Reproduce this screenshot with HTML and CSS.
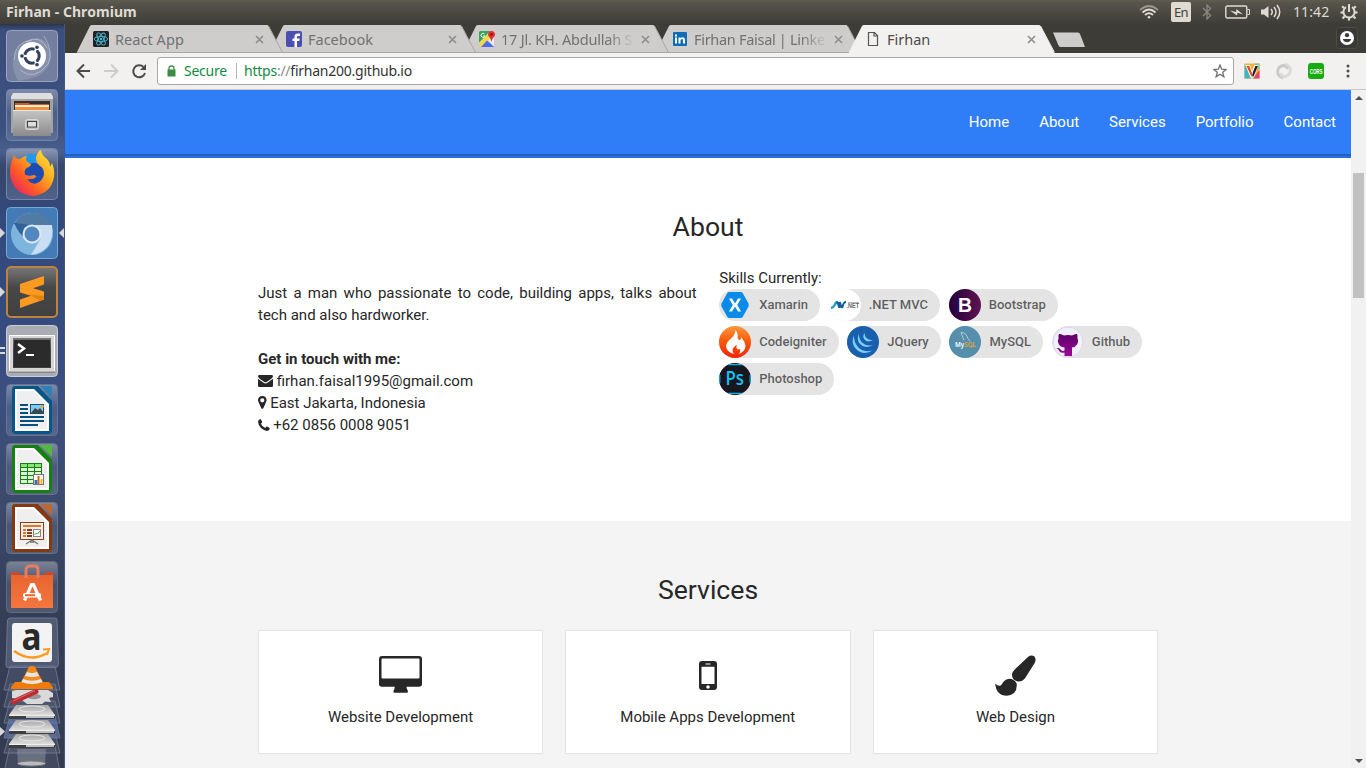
FILE: index.html
```html
<!DOCTYPE html>
<html lang="en">
<head>
<meta charset="utf-8">
<title>Firhan</title>
<link rel="stylesheet" href="styles.css">
</head>
<body>
<svg class="defs" width="0" height="0">
  <defs>
    <linearGradient id="gloss" x1="0" y1="0" x2="0" y2="1"><stop offset="0" stop-color="#fff" stop-opacity=".34"/><stop offset=".45" stop-color="#fff" stop-opacity=".08"/><stop offset="1" stop-color="#fff" stop-opacity=".14"/></linearGradient>
    <linearGradient id="silver" x1="0" y1="0" x2="0" y2="1"><stop offset="0" stop-color="#c4c4c4"/><stop offset="1" stop-color="#8b8b8b"/></linearGradient>
    <linearGradient id="fox" x1="1" y1="0" x2="0" y2="1"><stop offset="0" stop-color="#fff04a"/><stop offset=".35" stop-color="#ffb01f"/><stop offset=".65" stop-color="#ff5a26"/><stop offset="1" stop-color="#e0137e"/></linearGradient>
    <linearGradient id="drive" x1="0" y1="0" x2="0" y2="1"><stop offset="0" stop-color="#a5a5a5"/><stop offset="1" stop-color="#dcdcdc"/></linearGradient>
    <linearGradient id="dark" x1="0" y1="0" x2="0" y2="1"><stop offset="0" stop-color="#777"/><stop offset=".4" stop-color="#484848"/><stop offset="1" stop-color="#404040"/></linearGradient>
    <linearGradient id="bag" x1="0" y1="0" x2="0" y2="1"><stop offset="0" stop-color="#e8642e"/><stop offset="1" stop-color="#f5763f"/></linearGradient>
    <linearGradient id="flame" x1="0" y1="0" x2="0" y2="1"><stop offset="0" stop-color="#fb9a3c"/><stop offset=".45" stop-color="#f85c0c"/><stop offset="1" stop-color="#f3230a"/></linearGradient>
    <linearGradient id="boot" x1="0" y1="0" x2="1" y2="0"><stop offset="0" stop-color="#24003c"/><stop offset="1" stop-color="#5e1450"/></linearGradient>
    <linearGradient id="octo" x1="0" y1="0" x2="0" y2="1"><stop offset="0" stop-color="#5b0068"/><stop offset="1" stop-color="#9a0a94"/></linearGradient>
    <g id="tab-shape"><path d="M0 28 L13 2 Q13.500 1 15 1 H190 Q191 1 191.500 2 L205 28Z" stroke="none"/><path d="M191.500 2 L205.500 28.500 M0 28.500 H205" fill="none"/></g>
    <g id="cross"><path d="M1 1 L8 8 M8 1 L1 8" stroke="#8d8d8b" stroke-width="1.600" fill="none"/></g>
  </defs>
</svg>

<header class="panel">
  <span class="panel-title">Firhan - Chromium</span>
  <div class="indicators">
    <svg class="i-wifi" width="20" height="16" viewBox="0 0 20 16" fill="none" stroke="#dfdbd2" stroke-width="1.800"><path d="M1 6 Q10 -2 19 6" opacity=".5"/><path d="M3.500 8.500 Q10 2.500 16.500 8.500"/><path d="M6 11 Q10 7.500 14 11"/><circle cx="10" cy="13.200" r="1.300" fill="#dfdbd2" stroke="none"/></svg>
    <span class="lang">En</span>
    <svg class="i-bt" width="10" height="18" viewBox="0 0 10 18" fill="none" stroke="#8a8880" stroke-width="1.300"><path d="M1 5 L8.500 12.500 L5 16 V2 L8.500 5.500 L1 13"/></svg>
    <svg class="i-bat" width="25" height="14" viewBox="0 0 25 14"><rect x=".8" y="1" width="21" height="12" rx="1.500" fill="none" stroke="#dfdbd2" stroke-width="1.400"/><path d="M22.500 4.500 h2 v5 h-2" fill="none" stroke="#dfdbd2"/><path d="M5 5.500 L11 7 L11.500 4 L18 9.500 L12.500 7.800 L12 10.500Z" fill="#dfdbd2"/></svg>
    <svg class="i-vol" width="21" height="18" viewBox="0 0 21 18"><path d="M1 6.500 h3 L8.500 3 v12 L4 11.500 h-3Z" fill="#dfdbd2"/><path d="M11 6 q2.500 3 0 6 M14 4 q4 5 0 10 M17 2 q5.500 7 0 14" fill="none" stroke="#dfdbd2" stroke-width="1.500"/></svg>
    <span class="clock">11:42</span>
    <svg class="i-gear" width="18" height="18" viewBox="0 0 18 18" fill="none" stroke="#dfdbd2"><path d="M6 4.200 A5.600 5.600 0 1 0 12 4.200" stroke-width="2"/><path d="M9 1 v8" stroke-width="2"/><path d="M9 15 v2.500 M3 9.500 h-2.500 M15 9.500 h2.500 M4.500 13.500 l-2 2 M13.500 13.500 l2 2 M4 5 l-1.800 -1.800 M14 5 l1.800 -1.800" stroke-width="2.200"/></svg>
  </div>
</header>

<div class="desktop">
  <aside class="launcher">
    <div class="tile"><svg viewBox="0 0 52 52"><rect x=".5" y=".5" width="51" height="51" rx="4" fill="#747f9f" stroke="#98a4c4"/><path d="M8 42 Q3 20 22 10 Q38 3 44 20 Q48 36 32 46 Q22 50 12 51 Z" fill="#fff" opacity=".14"/><path d="M8 30 Q8 12 26 10 M14 40 Q28 52 42 34 M38 6 Q48 22 42 34 M20 12 Q34 4 41 18" stroke="#d4daea" fill="none" opacity=".5"/><circle cx="26" cy="26" r="14" fill="#fff"/><circle cx="26" cy="26" r="7.200" fill="none" stroke="#35405f" stroke-width="3"/><path d="M26 26 L14 26 M26 26 L32 36 M26 26 L32 16" stroke="#fff" stroke-width="2"/><circle cx="26" cy="26" r="4" fill="#fff"/><circle cx="16" cy="26" r="2.300" fill="#35405f" stroke="#fff"/><circle cx="31" cy="34.700" r="2.300" fill="#35405f" stroke="#fff"/><circle cx="31" cy="17.300" r="2.300" fill="#35405f" stroke="#fff"/></svg></div>
    <div class="tile"><svg viewBox="0 0 52 52"><rect x=".5" y=".5" width="51" height="51" rx="4" fill="url(#gloss)" stroke="#7585a8"/><path d="M5 8 L7 4 H45 L47 8 V44 H5Z" fill="#a2a2a2"/><path d="M5 8 L7 4 H45 L47 8 V10 H5Z" fill="#dedede"/><rect x="8" y="12" width="36" height="10" fill="#38302c"/><path d="M9 14 h14 l1 1 h19 v8 h-34Z" fill="#c95a2b"/><path d="M9 16 h34 v2 h-34Z" fill="#ffe9cf"/><path d="M9 18 h34 v4 h-34Z" fill="#f1923e"/><path d="M7 21 H45 V47 H7Z" fill="url(#silver)"/><path d="M7 21.500 H45" stroke="#e4e4e4"/><rect x="19.500" y="30.500" width="13" height="10" rx="2" fill="#bbb" stroke="#d8d8d8"/><rect x="21.500" y="32.500" width="9" height="5.500" fill="#ddd" stroke="#444"/></svg></div>
    <div class="tile"><svg viewBox="0 0 52 52"><rect x=".5" y=".5" width="51" height="51" rx="4" fill="url(#gloss)" stroke="#7585a8"/><circle cx="26" cy="23" r="17" fill="#1f97ee"/><circle cx="28" cy="27" r="12" fill="#1d4bb0"/><path d="M8 7 Q9 11 14 11 Q17 8 21 8 Q18.500 12 22 14.500 L25 16 Q25.500 18 20 20.500 Q17.500 24 19.500 27 Q24 28.500 28 27 Q31 28 30 29 Q27 32 21 31 Q25 36.500 30 35.500 Q37 33 38 26 Q38 20 34 18 Q29 14 30 9 Q32 3 35 2 Q36 8 41 11 Q44 14 44 19 L46 15 Q49 22 48 29 Q45 46 27 48 Q9 46 5 31 Q2 21 8 7Z" fill="url(#fox)"/></svg></div>
    <div class="tile"><svg viewBox="0 0 52 52"><rect x=".5" y=".5" width="51" height="51" rx="4" fill="#437bb6" stroke="#76a7d5"/><circle cx="26" cy="27" r="21" fill="#7eb5df"/><path d="M8 17 Q14 6 26 6 Q40 6 46 18 H26Z" fill="#4f7ba4"/><path d="M8 16 Q14 29 19 30 Q18 19 26 18Z" fill="#2f6296"/><path d="M26 18 H46 Q48 30 42 39 Q35 47 25 48 L35 31Z" fill="#c9def2"/><circle cx="26" cy="27" r="9.500" fill="#dce9f7"/><circle cx="26" cy="27" r="7.500" fill="#5387c0"/></svg><i class="arrow arrow-left"></i><i class="arrow arrow-right"></i></div>
    <div class="tile"><svg viewBox="0 0 52 52"><rect x="1" y="1" width="50" height="50" rx="4" fill="url(#dark)" stroke="#bd843f" stroke-width="2"/><path d="M14 18 L38 10 V18.500 L27 22.300 L38 25.500 V33.500 L14 42 V33.500 L25 29.700 L14 26.500Z" fill="#ff9a21"/><path d="M20 28.300 L38 30 V33.500 L34 34.800 L25 29.700Z" fill="#e5820f"/></svg><i class="arrow arrow-left"></i></div>
    <div class="tile"><svg viewBox="0 0 52 52"><rect x=".5" y=".5" width="51" height="51" rx="4" fill="#aaacb3" stroke="#ccced4"/><rect x="3.500" y="10.500" width="45" height="36" fill="#d6d6d6" stroke="#fff"/><path d="M3 47 h46" stroke="#666"/><rect x="7" y="13" width="38" height="30" fill="url(#dark)"/><rect x="8" y="15" width="36" height="27" fill="#2b2b2b"/><path d="M12 19 L18 23.500 L12 28" fill="none" stroke="#fff" stroke-width="2.500"/><path d="M20 30 h8" stroke="#fff" stroke-width="2"/></svg><i class="bars"></i></div>
    <div class="tile"><svg viewBox="0 0 52 52"><rect x=".5" y=".5" width="51" height="51" rx="4" fill="url(#gloss)" stroke="#66738f"/><path d="M9 2 H32 L46 17 V46 Q46 50 42 50 H10 Q6 50 6 46 V6 Q6 2 9 2Z" fill="#075687"/><path d="M34 2 H46 V14Z" fill="#2f80b4"/><path d="M9 5 H28 L43 20 V47 H9Z" fill="#fff"/><path d="M11 7 H27 L41 21 V45 H11Z" fill="#efefef"/><path d="M14 21 h8 M14 25 h8 M14 29 h8 M14 33 h24 M14 37 h24 M14 41 h18" stroke="#08507e" stroke-width="2"/><rect x="24.500" y="20.500" width="13" height="9" fill="#85c9f2" stroke="#08507e"/><path d="M25 29 l4 -5 l3 2 l2 -2 l4 5Z" fill="#444"/><circle cx="36" cy="22.500" r="1.800" fill="#dfb64a"/></svg></div>
    <div class="tile"><svg viewBox="0 0 52 52"><rect x=".5" y=".5" width="51" height="51" rx="4" fill="url(#gloss)" stroke="#66738f"/><path d="M9 2 H32 L46 17 V46 Q46 50 42 50 H10 Q6 50 6 46 V6 Q6 2 9 2Z" fill="#158010"/><path d="M34 2 H46 V14Z" fill="#53bb35"/><path d="M9 5 H28 L43 20 V47 H9Z" fill="#fff"/><path d="M11 7 H27 L41 21 V45 H11Z" fill="#efefef"/><rect x="14" y="20" width="22" height="21" fill="#15800f"/><path d="M15 21h6v3h-6zM22 21h6v3h-6zM29 21h6v3h-6z" fill="#8be27a"/><path d="M15 25h6v3h-6zM22 25h6v3h-6zM29 25h6v3h-6zM15 29h6v3h-6zM22 29h6v3h-6zM29 29h6v3h-6zM15 33h6v3h-6zM22 33h6v3h-6zM15 37h6v3h-6zM22 37h6v3h-6z" fill="#dcf7d5"/><rect x="27.500" y="31.500" width="10" height="10" fill="#fff" stroke="#777"/><path d="M28.500 37h3v4h-3z" fill="#2d72be"/><path d="M31.500 33h2v8h-2z" fill="#dd5e16"/><path d="M34.500 36h2v5h-2z" fill="#eebb1a"/></svg></div>
    <div class="tile"><svg viewBox="0 0 52 52"><rect x=".5" y=".5" width="51" height="51" rx="4" fill="url(#gloss)" stroke="#66738f"/><path d="M9 2 H32 L46 17 V46 Q46 50 42 50 H10 Q6 50 6 46 V6 Q6 2 9 2Z" fill="#86390f"/><path d="M34 2 H46 V14Z" fill="#b96838"/><path d="M9 5 H28 L43 20 V47 H9Z" fill="#fff"/><path d="M11 7 H27 L41 21 V45 H11Z" fill="#efefef"/><rect x="14.500" y="20.500" width="23" height="17" fill="#fbeee5" stroke="#87401b"/><path d="M17 24 h18" stroke="#dd7735" stroke-width="2"/><path d="M17 28h3 M17 31h3 M17 34h3" stroke="#dd7735" stroke-width="2"/><path d="M21 28h5 M21 31h5 M21 34h5" stroke="#87401b" stroke-width="2"/><rect x="27.500" y="27.500" width="7" height="7" fill="#fff" stroke="#888"/><path d="M28.500 33 l2 -2 l1 1 l2.500 -3" fill="none" stroke="#33a52c"/><path d="M26 38 L20 42 M26 38 L32 42 M24 40h4" stroke="#777" stroke-width="1.500"/></svg></div>
    <div class="tile"><svg viewBox="0 0 52 52"><rect x=".5" y=".5" width="51" height="51" rx="4" fill="url(#gloss)" stroke="#606982"/><path d="M5 11 h7 l2 3 h24 l2 -3 h7 v5 h-42Z" fill="#c94b2c"/><rect x="5" y="14" width="42" height="33" fill="url(#bag)"/><path d="M20 17 V9 Q20 5 24 5 H29 Q32 5 32 9 V17" fill="none" stroke="#e87b60" stroke-width="3"/><path d="M18.500 39.500 L25.500 23.500 H27.500 L34.500 39.500" fill="none" stroke="#fff" stroke-width="3.200"/><rect x="17" y="32" width="18" height="4.500" rx="2" fill="#fff"/><path d="M19 34.200 h10" stroke="#e8692f" stroke-width="2"/></svg></div>
    <div class="stack">
      <svg width="65" height="151" viewBox="0 617 65 151">
        <path d="M9 618 H55 Q57 618 57 620 L58.500 664 Q58 667.500 56 667.500 H8 Q6 667.500 6 665 L7.500 620Z" fill="#7c86a0" fill-opacity=".4" stroke="#6d7690"/>
        <g stroke="#69728c" fill="#8790a8" fill-opacity=".18"><path d="M10 666 H55 L60 690 H4Z"/><path d="M10 684 H55 L60 707 H4Z"/><path d="M10 701 H55 L60 723 H4Z"/><path d="M10 716 H55 L60 738 H4Z" fill="#6780c4" fill-opacity=".6"/><path d="M10 733 H55 L60 753 H4Z"/><path d="M10 746 H55 L60 772 H4Z"/></g>
        <rect x="12" y="623" width="40" height="39" rx="3" fill="#f3f3f3"/>
        <path d="M14 651 Q31 663 47 653" fill="none" stroke="#ff9a1c" stroke-width="2.500"/><path d="M43 649.500 L49 649 L47 655" fill="none" stroke="#ff9a1c" stroke-width="2"/>
        <text x="21.500" y="649.500" class="amazon-a" textLength="20" lengthAdjust="spacingAndGlyphs">a</text>
        <path d="M12 691 L16 690 H48 L53 693 V697 L49 698 L51 702 L45 701.500 L42 704 H27 L22 700 L12 698Z" fill="#d9d9d9"/><ellipse cx="34" cy="696.500" rx="7" ry="2.800" fill="#969696"/><path d="M13 702 L36 691.500" stroke="#b92c33" stroke-width="5" stroke-linecap="round"/><path d="M13 701 L35 690.500" stroke="#e4686a" stroke-width="1"/>
        <path d="M15 682 H49 L53 687 V689 H11 V687Z" fill="#f07b09"/><path d="M29 667 Q32 665 35 667 L43 682 Q32 687 21 682Z" fill="#f58a19"/><path d="M27 672 Q32 674 37 672 L39 676 Q32 678 25 676Z M23 679 Q32 682.500 41 679 L42.500 682 Q32 686 21.500 682Z" fill="#e6e6e6"/>
        <g id="hdd"><path d="M16 705 H48 L55 715 H9Z" fill="url(#drive)"/><path d="M9 715 H55 V719 H9Z" fill="#3f3f3f"/><path d="M26 717h28" stroke="#bfbfbf" stroke-width="2"/><path d="M9 715.500h46" stroke="#eee"/><ellipse cx="32" cy="709" rx="13" ry="3" fill="none" stroke="#e6e6e6"/></g>
        <use href="#hdd" y="15"/><use href="#hdd" y="29"/>
        <path d="M17 749 H46 L45 764 Q32 768 18 764Z" fill="#8d939f" opacity=".5"/><ellipse cx="31.500" cy="763.500" rx="14" ry="2.500" fill="#b9bbbe" stroke="#777"/>
        <path d="M0 727 L5 731.500 L0 736Z" fill="#d8d8d8"/>
      </svg>
    </div>
  </aside>

  <main class="browser">
    <div class="tabstrip">
      <div class="tab t1"><svg class="tab-bg" width="207" height="29"><use href="#tab-shape"/></svg>
        <svg class="fav" viewBox="0 0 16 16"><rect width="16" height="16" rx="1.500" fill="#222"/><g fill="none" stroke="#45b8d6" stroke-width=".9"><ellipse cx="8" cy="8" rx="6.800" ry="2.600"/><ellipse cx="8" cy="8" rx="6.800" ry="2.600" transform="rotate(60 8 8)"/><ellipse cx="8" cy="8" rx="6.800" ry="2.600" transform="rotate(120 8 8)"/></g><circle cx="8" cy="8" r="1.300" fill="#45b8d6"/></svg>
        <span class="tab-title w-react">React App</span><svg class="close" viewBox="0 0 9 9"><use href="#cross"/></svg></div>
      <div class="tab t2"><svg class="tab-bg" width="207" height="29"><use href="#tab-shape"/></svg>
        <svg class="fav" viewBox="0 0 16 16"><rect width="16" height="16" rx="2" fill="#4a4fb2"/><path d="M8.500 16 V10 H6.500 V7.500 H8.500 V5.500 Q8.500 2.500 11.500 2.500 H14 V5 H12.200 Q11 5 11 6.200 V7.500 H13.700 L13.300 10 H11 V16Z" fill="#fff"/></svg>
        <span class="tab-title">Facebook</span><svg class="close" viewBox="0 0 9 9"><use href="#cross"/></svg></div>
      <div class="tab t3"><svg class="tab-bg" width="207" height="29"><use href="#tab-shape"/></svg>
        <svg class="fav" viewBox="0 0 16 16"><path d="M1 0 H11 L0 12 V1Z" fill="#35a65b"/><path d="M0 12 L10 2 L13 7 L3 15.500 H1Z" fill="#f7d948"/><path d="M2 16 L8 9.500 L15 16Z" fill="#4b6bf3"/><path d="M9 9 L15 5 V15Z" fill="#eee"/><path d="M5.500 3 A2 2 0 1 0 6 5 H4.200" fill="none" stroke="#fff"/><path d="M12.500 0 Q16 0 16 3.500 Q16 5 14 7 Q13 8.500 12.500 11 Q12 8.500 11 7 Q9 5 9 3.500 Q9 0 12.500 0Z" fill="#e62e2e"/><circle cx="12.500" cy="3.500" r="1.300" fill="#7a1414"/></svg>
        <span class="tab-title w-maps">17 Jl. KH. Abdullah S</span><svg class="close" viewBox="0 0 9 9"><use href="#cross"/></svg></div>
      <div class="tab t4"><svg class="tab-bg" width="207" height="29"><use href="#tab-shape"/></svg>
        <svg class="fav" viewBox="0 0 16 16"><rect x="1" y="1" width="14" height="14" rx="1" fill="#0f6cb6"/><path d="M3 6.500h2v6h-2zM3 3.500h2v2h-2zM6.500 6.500h2v1Q9.200 6.300 10.500 6.300 Q13 6.300 13 9v3.500h-2V9.300Q11 8 10 8 Q8.500 8 8.500 9.500v3h-2Z" fill="#fff"/></svg>
        <span class="tab-title w-linked">Firhan Faisal | Linke</span><svg class="close" viewBox="0 0 9 9"><use href="#cross"/></svg></div>
      <div class="tab t5 active"><svg class="tab-bg" width="207" height="29"><use href="#tab-shape"/></svg>
        <svg class="fav" viewBox="0 0 16 16"><path d="M3.500 1.500 H9.500 L12.500 4.500 V14.500 H3.500Z M9 2 V5 H12" fill="none" stroke="#555" stroke-width="1.200"/></svg>
        <span class="tab-title w-firhan">Firhan</span><svg class="close" viewBox="0 0 9 9"><use href="#cross"/></svg></div>
      <svg class="newtab" width="34" height="16" viewBox="0 0 34 16"><path d="M1 .5 H26 Q27.500 .5 28 2 L33 15 H8.500 Q7 15 6.300 13Z" fill="#cfcdcb"/></svg>
      <svg class="profile" width="22" height="22" viewBox="0 0 22 22"><rect x=".5" y=".5" width="21" height="21" rx="3" fill="#393935" stroke="#4c4b46"/><circle cx="11" cy="11" r="7" fill="#fff"/><circle cx="11" cy="8.200" r="2.100" fill="#393935"/><path d="M6.800 12 H15.200 Q14 15.300 11 15.300 Q8 15.300 6.800 12Z" fill="#393935"/></svg>
    </div>

    <div class="toolbar">
      <svg class="nav-icons" width="84" height="18" viewBox="0 0 84 18" fill="none" stroke-width="2"><path d="M15 9 H3 M9 2.500 L2.500 9 L9 15.500" stroke="#4b4b4b"/><path d="M29 9 H42 M36 2.500 L42.500 9 L36 15.500" stroke="#ccc"/><path d="M68.500 5 A6 6 0 1 0 70 11" stroke="#4b4b4b"/><path d="M71 2 V8 H65Z" fill="#4b4b4b" stroke="none"/></svg>
      <div class="omnibox">
        <svg class="lock" width="9" height="12" viewBox="0 0 9 12"><rect x=".5" y="4.500" width="8" height="7" fill="#3c8d43"/><path d="M2 5 V3 Q2 1 4.500 1 Q7 1 7 3 V5" fill="none" stroke="#3c8d43" stroke-width="1.300"/></svg>
        <span class="secure">Secure</span><i class="sep"></i>
        <span class="url"><em class="green">https</em><em class="dim">://</em>firhan200.github.io</span>
        <svg class="star" width="14" height="14" viewBox="0 0 14 14"><path d="M7 1 L8.700 5.200 L13.200 5.500 L9.700 8.300 L10.900 12.800 L7 10.300 L3.100 12.800 L4.300 8.300 L.8 5.500 L5.300 5.200Z" fill="none" stroke="#6e6e6e" stroke-width="1.300"/></svg>
      </div>
      <svg class="ext" width="16" height="16" viewBox="0 0 16 16"><rect x=".5" y=".5" width="15" height="15" fill="#f6b13a"/><path d="M.5 1 L7 15.500 H.5Z" fill="#3cb5c6"/><path d="M9 15.500 L15.500 7 V15.500Z" fill="#e63f76"/><path d="M10 .5 H15.500 V7Z" fill="#7cc6a0"/><path d="M1.500 2 H6 L8 8 L10.500 2 H14.500 L10 14.500 H6.500Z" fill="#fff"/><path d="M2.500 3 H5.300 L8.500 11.500 L7.300 13.500Z" fill="#e64a22"/><path d="M11.300 3 H14 L9.500 13.500 H8L9 9Z" fill="#1c1c2c"/></svg>
      <svg class="ext" width="16" height="16" viewBox="0 0 16 16" fill="none"><path d="M7 15 Q1 13.500 1.800 7.500 Q2.500 3 8 2.500 Q11 3 11.500 6" stroke="#c9c9c9" stroke-width="2.800"/><path d="M9 1 Q15 2.500 14.200 8.500 Q13.500 13 8 13.500 Q5 13 4.500 10" stroke="#dadada" stroke-width="2.800"/></svg>
      <svg class="ext" width="16" height="16" viewBox="0 0 16 16"><rect width="16" height="16" rx="3" fill="#17ab10"/><text x="1.700" y="10.500" class="cors" textLength="12.800" lengthAdjust="spacingAndGlyphs">CORS</text></svg>
      <svg class="dots" width="4" height="14" viewBox="0 0 4 14" fill="#4b4b4b"><circle cx="2" cy="2" r="1.500"/><circle cx="2" cy="7" r="1.500"/><circle cx="2" cy="12" r="1.500"/></svg>
    </div>

    <div class="viewport">
      <div class="page">
        <nav class="site-nav"><a>Home</a><a>About</a><a>Services</a><a>Portfolio</a><a>Contact</a></nav>
        <div class="hero-edge"></div>
        <section class="about">
          <h2>About</h2>
          <div class="about-grid">
            <div class="bio">
              <p>Just a man who passionate to code, building apps, talks about tech and also hardworker.</p>
              <strong>Get in touch with me:</strong>
              <div><svg width="15" height="12" viewBox="0 0 15 12" fill="#272727"><path d="M0 1.300 Q0 0 1.300 0 H13.700 Q15 0 15 1.300 Q15 2.500 13 4 L9 6.800 Q7.500 7.800 6 6.800 L2 4 Q0 2.500 0 1.300Z M0 3.800 L5.500 7.800 Q7.500 9 9.500 7.800 L15 3.800 V10.700 Q15 12 13.700 12 H1.300 Q0 12 0 10.700Z"/></svg> firhan.faisal1995@gmail.com</div>
              <div class="place"><svg width="9" height="13" viewBox="0 0 9 13" fill="#272727"><path fill-rule="evenodd" d="M4.300 0 Q8.600 .2 8.600 4.300 Q8.500 5.500 5.300 12.200 Q4.300 13.500 3.300 12.200 Q.1 5.500 0 4.300 Q0 .2 4.300 0Z M4.300 2.200 A2.100 2.100 0 1 0 4.300 6.400 A2.100 2.100 0 1 0 4.300 2.200Z"/></svg> East Jakarta, Indonesia</div>
              <div class="place"><svg width="12" height="12" viewBox="0 0 12 12" fill="#272727"><path d="M0 2.500 Q.3 .5 2.300 0 Q3 0 4.200 2.800 Q4.200 3.600 2.900 4.700 Q4 7.500 7.200 9 Q8.300 7.600 9 7.600 Q11.500 8.700 11.800 9.400 Q11.600 11.800 9 12 Q6.500 11.900 3 8.900 Q0 5.500 0 2.500Z"/></svg> +62 0856 0008 9051</div>
            </div>
            <div class="skills">
              <div>Skills Currently:</div>
              <div class="chips">
                <span class="chip"><svg viewBox="0 0 32 32"><path d="M10 3 H22 Q23 3 23.800 4.300 L29.500 14.500 Q30 16 29.500 17.500 L23.800 27.700 Q23 29 22 29 H10 Q9 29 8.200 27.700 L2.500 17.500 Q2 16 2.500 14.500 L8.200 4.300 Q9 3 10 3Z" fill="#0a8be9"/><path d="M10 9.500 H13 L16 14.600 L19 9.500 H22 L18.200 16 L22 22.500 H19 L16 17.400 L13 22.500 H10 L13.800 16Z" fill="#fff"/></svg>Xamarin</span>
                <span class="chip"><svg viewBox="0 0 32 32"><circle cx="16" cy="16" r="16" fill="#fff"/><path d="M2 19 Q4.500 18.500 6 15.500 Q7 13 8.500 13" fill="none" stroke="#2aa0d8" stroke-width="2.500"/><path d="M7.500 13 Q9.500 14 10 18.500 M10.500 13 V19 M11 13 Q12 19.500 13.500 18 Q14.500 13 17 13" fill="none" stroke="#12609f" stroke-width="2"/><text x="17.500" y="19" class="net" textLength="12.500" lengthAdjust="spacingAndGlyphs">.NET</text><path d="M19 13.500 h11" stroke="#b4b4b4"/></svg>.NET MVC</span>
                <span class="chip"><svg viewBox="0 0 32 32"><circle cx="16" cy="16" r="16" fill="url(#boot)"/><text x="9" y="23" class="boot-b" textLength="14" lengthAdjust="spacingAndGlyphs">B</text></svg>Bootstrap</span>
                <br>
                <span class="chip"><svg viewBox="0 0 32 32"><circle cx="16" cy="16" r="16" fill="url(#flame)"/><path d="M16.500 4 Q19.500 8 18.500 12 Q19 14 21 14 Q22.500 13.500 22 11 Q26 15.500 26.500 20 Q26 25.500 20 28 Q22 25 20.500 22.500 Q19 24.500 17.800 22.500 Q17 20.500 18 18.500 Q13.500 21.500 13.500 24 Q13.500 26.500 15 28 Q7.500 26 7 20 Q7.500 16 12.500 12 Q16.500 8.500 16.500 4Z" fill="#fff"/></svg>Codeigniter</span>
                <span class="chip"><svg viewBox="0 0 32 32"><circle cx="16" cy="16" r="16" fill="#1a5eae"/><g fill="#7acfff"><path d="M7 9 Q3.500 17 9 23 Q16 30 26 24.500 Q17 27 11.500 21.500 Q6.500 16 7 9Z"/><path d="M12 7.500 Q9 13.500 13 18 Q18 23.500 26 19 Q19 20.500 15 16.500 Q11.500 12.500 12 7.500Z"/><path d="M17.500 7 Q15 10.500 17.500 13.500 Q20.500 17 26 14 Q21.500 14.500 19.500 12 Q17.500 9.500 17.500 7Z"/></g></svg>JQuery</span>
                <span class="chip"><svg viewBox="0 0 32 32"><circle cx="16" cy="16" r="16" fill="#558fac"/><path d="M12 6.500 Q17 6.500 19 12.500 L21 15 M12 6.500 Q13 9 14 12 L15 14" fill="none" stroke="#c5d8e2" stroke-width=".8"/><text x="6" y="21" class="mysql" textLength="21" lengthAdjust="spacingAndGlyphs"><tspan fill="#fff">My</tspan><tspan fill="#e7a42d">SQL</tspan></text></svg>MySQL</span>
                <span class="chip"><svg viewBox="0 0 32 32"><circle cx="16" cy="16" r="15" fill="#f0f0ff" stroke="#d7d7ea"/><path d="M7 8 Q9 7.500 12 9.500 Q16 8.500 20 9.500 Q23 7.500 25 8 Q26 10 25.300 12 Q27 15 25 18.500 Q23.500 21 20 21.500 V30 H12.500 V26.500 Q8 27.500 7 24.500 Q6.500 23 4.500 22.300 Q7.500 21.500 9 24 Q10.500 25.500 12.500 24.500 V21.500 Q7.500 21 6.500 17.500 Q5 15 6.700 12 Q6 10 7 8Z" fill="url(#octo)"/></svg>Github</span>
                <br>
                <span class="chip"><svg viewBox="0 0 32 32"><circle cx="16" cy="16" r="16" fill="#18161f"/><path d="M9 1.600 H23 M9 30.400 H23 M.8 12 V20 M31.200 12 V20" stroke="#0ab8e8" stroke-width="1.200"/><text x="6.500" y="22" class="ps" textLength="18.500" lengthAdjust="spacingAndGlyphs">Ps</text></svg>Photoshop</span>
              </div>
            </div>
          </div>
        </section>
        <section class="services">
          <h2>Services</h2>
          <div class="cards">
            <div class="card"><svg width="44" height="42" viewBox="0.500 0 44 42"><path fill-rule="evenodd" d="M3.500 2 H40.500 Q43.500 2 43.500 5 V30 Q43.500 32.800 40.500 32.800 H28 Q28 35 29.500 37 Q29.500 38.800 28.500 38.800 H16 Q14.800 38.800 14.800 37.500 Q16.300 35 16.300 32.800 H3.500 Q.5 32.800 .5 30 V5 Q.5 2 3.500 2Z M4 4.500 Q3 4.500 3 5.500 V23.500 Q3 24.500 4 24.500 H40 Q41 24.500 41 23.500 V5.500 Q41 4.500 40 4.500Z" fill="#272727"/></svg><span>Website Development</span></div>
            <div class="card"><svg width="18" height="42" viewBox="0 0 18 42"><path fill-rule="evenodd" d="M3 7 H15 Q18 7 18 10 V33 Q18 36 15 36 H3 Q0 36 0 33 V10 Q0 7 3 7Z M2.500 12.800 V30 H15.500 V12.800Z M6.500 9.600 V10.600 H11.500 V9.600Z M9 31.200 A1.800 1.800 0 1 0 9 34.800 A1.800 1.800 0 1 0 9 31.200Z" fill="#272727"/></svg><span>Mobile Apps Development</span></div>
            <div class="card"><svg width="42" height="42" viewBox="0.800 0 42 42"><path d="M40 2.200 Q42.500 5 40.500 9 L31 24 Q28 28 23.500 27.500 Q17.500 26 17.800 20.500 Q18.200 17.500 21 15 L34 2.800 Q37 .3 40 2.200Z M14 25 Q19 24 22.500 29.500 Q23.500 41 12.500 41.800 Q2 41.500 1 29.500 Q5 33.500 7.500 30.500 Q10 25.500 14 25Z" fill="#272727"/></svg><span>Web Design</span></div>
          </div>
        </section>
      </div>
      <div class="scrollbar"><i class="sb-up"></i><i class="sb-thumb"></i><i class="sb-down"></i></div>
    </div>
  </main>
</div>
</body>
</html>
```
FILE: styles.css
```css
* { box-sizing: border-box; }
body { margin: 0; width: 1366px; height: 768px; overflow: hidden; font-family: Roboto, sans-serif; font-size: 15px; color: #272727; }
svg { display: block; flex: none; }
.defs { position: absolute; }

.panel { height: 24px; display: flex; align-items: center; justify-content: space-between; padding: 0 8px 0 6px; background: linear-gradient(#5f5d50, #55534a 15%, #3e3d38); color: #dfdbd2; font-family: "Noto Sans", sans-serif; }
.panel-title { font-size: 14px; font-weight: 700; letter-spacing: .05px; line-height: 22px; }
.indicators { display: flex; align-items: center; height: 24px; }
.i-wifi { margin-right: 12px; }
.lang { width: 20px; height: 20px; background: #dfdbd2; color: #3f3e39; border-radius: 2px; font-size: 13px; line-height: 20px; text-align: center; letter-spacing: -.6px; margin-right: 11px; }
.i-bt { margin-right: 13px; }
.i-bat { margin-right: 10px; }
.i-vol { margin-right: 12px; }
.clock { width: 36px; font-size: 14px; letter-spacing: .1px; line-height: 22px; margin-right: 11px; white-space: nowrap; }

.desktop { display: flex; height: 744px; }
.launcher { width: 65px; flex: none; padding-top: 6px; display: flex; flex-direction: column; align-items: flex-start; background: linear-gradient(#2b344d 0, #3a4f7b 6px, #3b5080 14%, #4a5f8c 17%, #36476c 19%, #34497c 26%, #34497c 36%, #3b5081 50%, #3c4a6c 64%, #353e57 80%, #343b50); border-right: 1px solid #435882; }
.tile { position: relative; width: 52px; height: 52px; margin: 0 0 7px 6px; flex: none; }
.tile svg { width: 52px; height: 52px; }
.stack { margin-top: -3px; height: 151px; }
.stack svg { overflow: visible; }
.amazon-a { font: 700 38px "Noto Sans", sans-serif; fill: #2a2a2a; }
.arrow { position: absolute; top: 21px; border: 5px solid transparent; }
.arrow-left { left: -6px; border-left-color: #d8d8d8; border-right: 0; }
.arrow-right { right: -6px; border-right-color: #d8d8d8; border-left: 0; }
.bars { position: absolute; left: -6px; top: 22px; width: 5px; height: 7px; border-top: 2px solid #d8d8d8; border-bottom: 2px solid #d8d8d8; }

.browser { flex: 1; min-width: 0; display: flex; flex-direction: column; }
.tabstrip { height: 29px; display: flex; padding-left: 12px; background: #3d3c37; }
.tab { position: relative; width: 193px; height: 29px; flex: none; display: flex; align-items: center; padding: 1px 5px 0 16px; font-family: "Noto Sans", sans-serif; }
.tab-bg { position: absolute; left: 0; top: 0; fill: #cfcdcb; stroke: #aaa8a4; stroke-width: 1; }
.t1 { z-index: 5; } .t2 { z-index: 4; } .t3 { z-index: 3; } .t4 { z-index: 2; }
.t5 { z-index: 6; }
.active .tab-bg { fill: #f2f1f0; stroke: #f2f1f0; }
.fav { position: relative; width: 16px; height: 16px; margin-right: 6px; }
.tab-title { position: relative; width: 129px; height: 22px; margin-top: -1px; overflow: hidden; white-space: nowrap; font-size: 14.5px; line-height: 22px; color: #717171; }
.t3 .tab-title, .t4 .tab-title { width: 133px; margin-right: -4px; -webkit-mask-image: linear-gradient(90deg, #000 80%, transparent 101%); mask-image: linear-gradient(90deg, #000 80%, transparent 101%); }
.active .tab-title { color: #4a4a4a; }
.w-react { letter-spacing: .05px; }
.w-maps { letter-spacing: -.2px; }
.w-linked { letter-spacing: -.3px; }
.close { position: relative; width: 9px; height: 9px; margin-left: 11px; }
.newtab { margin: 8px 0 0 10px; }
.profile { margin: 3px 8px 0 auto; }

.toolbar { height: 37px; display: flex; align-items: center; background: #f2f1f0; border-bottom: 1px solid #c9c8c7; padding: 0 16px 0 10px; }
.nav-icons { margin-right: -2px; }
.omnibox { width: 1077px; height: 28px; display: flex; align-items: center; background: #fff; border: 1px solid #a8a8a8; border-radius: 3px; padding: 0 6px 0 9px; font-family: "Noto Sans", sans-serif; font-size: 14px; line-height: 20px; color: #333; margin-right: 10px; }
.secure { color: #138a43; width: 44px; margin: 0 0 0 8px; letter-spacing: -.25px; }
.sep { width: 1px; height: 16px; background: #b5b5b5; margin: 0 7px 0 8px; }
.url { letter-spacing: -.24px; }
.url em { font-style: normal; }
.green { color: #138a43; } .dim { color: #8a8a8a; }
.star { margin-left: auto; }
.ext { margin-right: 16px; overflow: visible; }
.dots { margin: 0 0 0 auto; }
.cors { font: 700 7px "Liberation Sans", sans-serif; fill: #fff; }

.viewport { flex: 1; display: flex; min-height: 0; }
.page { flex: 1; overflow: hidden; background: #fff; }
.site-nav { height: 64px; background: #2f7ef7; display: flex; justify-content: flex-end; line-height: 64px; color: #fff; }
.site-nav a { padding: 0 15px; }
.hero-edge { height: 4px; background: linear-gradient(#2258ae, #286bd0 50%, #2c75e6); }
h2 { margin: 0; font-weight: 400; font-size: 26.6px; line-height: 30px; text-align: center; }
.about { height: 363px; padding: 54px 193px 0; }
.about-grid { display: grid; grid-template-columns: 1fr 1fr; gap: 22.5px; line-height: 22px; margin-top: 25px; }
.bio { padding-top: 15px; }
.bio p { margin: 0 0 22px; text-align: justify; }
.bio strong { display: block; font-weight: 700; }
.bio svg { display: inline-block; vertical-align: -1px; }
.place svg { margin-right: -.6px; }
.chips { white-space: nowrap; line-height: 0; }
.chip { display: inline-block; height: 32px; line-height: 32px; font-size: 13px; font-weight: 500; color: rgba(0, 0, 0, .6); padding: 0 12px; border-radius: 16px; background: #e4e4e4; margin: 0 5px 5px 0; vertical-align: top; }
.chip svg { float: left; width: 32px; height: 32px; margin: 0 8px 0 -12px; }
.net { font: 700 6.5px "Liberation Sans", sans-serif; fill: #666; }
.boot-b { font: 700 20px "Liberation Sans", sans-serif; fill: #fff; }
.mysql { font: 600 7px "Noto Sans", sans-serif; }
.ps { font: 600 19px "Open Sans", sans-serif; fill: #0fc3f5; }
.services { height: 300px; background: #f4f4f4; padding: 54px 193px 0; }
.cards { display: grid; grid-template-columns: repeat(3, 1fr); gap: 22.5px; margin-top: 25px; }
.card { height: 124px; background: #fff; border: 1px solid #e4e4e4; display: flex; flex-direction: column; align-items: center; padding-top: 23px; line-height: 22px; }
.card:nth-child(2) { margin-left: -.5px; }
.card span { margin-top: 10px; }
.scrollbar { width: 15px; background: #f1f1f1; display: flex; flex-direction: column; align-items: center; padding: 6px 0 5px; }
.sb-up { border: 4px solid transparent; border-top: 0; border-bottom: 4px solid #505050; }
.sb-thumb { width: 11px; height: 125px; background: #c1c1c1; margin-top: 73px; }
.sb-down { border: 4px solid transparent; border-bottom: 0; border-top: 4px solid #505050; margin-top: auto; }
```
